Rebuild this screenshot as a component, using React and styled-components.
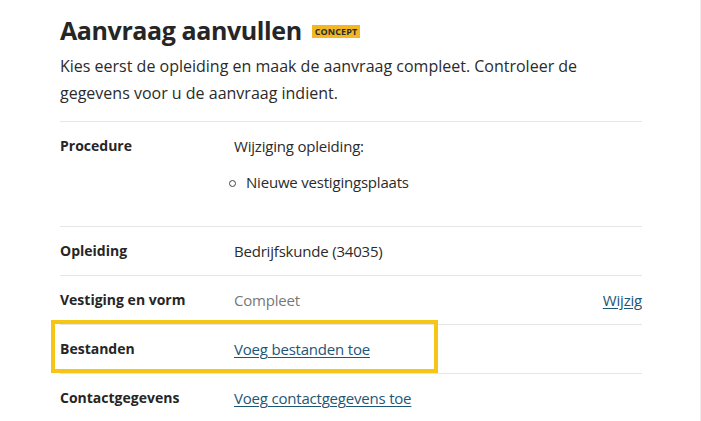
import React from "react";
import styled, { createGlobalStyle } from "styled-components";

const Global = createGlobalStyle`
  html, body { margin: 0; padding: 0; background: #fff; }
  body { font-family: "Open Sans", "Noto Sans", sans-serif; color: #262626; }
  * { box-sizing: border-box; }
`;

const Page = styled.div`
  width: 701px;
  height: 421px;
  overflow: hidden;
  padding: 12px 0 0 60px;
  border-right: 1px solid #ececec;
`;

const Main = styled.div`
  width: 582px;
`;

const TitleRow = styled.div`
  display: flex;
  align-items: center;
  gap: 10px;
`;

const Title = styled.h1`
  margin: 0;
  font-size: 25px;
  line-height: 36px;
  font-weight: 700;
  color: #262626;
  letter-spacing: -0.4px;
`;

const Badge = styled.span`
  display: inline-block;
  background: #f3b724;
  color: #2b2b2b;
  font-size: 9px;
  font-weight: 700;
  line-height: 13px;
  padding: 0 3px;
  margin-top: 3px;
  letter-spacing: 0.1px;
`;

const Intro = styled.p`
  margin: 5px 0 14px;
  font-size: 16px;
  line-height: 27px;
  color: #2b2b2b;
`;

const List = styled.div`
  border-top: 1px solid #e6e6e6;
`;

const Row = styled.div`
  position: relative;
  display: grid;
  grid-template-columns: 174px 1fr auto;
  padding: 12px 0;
  border-bottom: 1px solid #e6e6e6;
  font-size: 15px;
  line-height: 24px;
`;

const Label = styled.div`
  font-weight: 700;
  font-size: 14px;
  color: #262626;
`;

const Value = styled.div`
  letter-spacing: -0.2px;
  color: ${(p) => (p.$muted ? "#777" : "#2b2b2b")};
`;

const Link = styled.a`
  color: #1d5677;
  letter-spacing: -0.2px;
  text-decoration: underline;
  text-underline-offset: 2px;
  cursor: pointer;
`;

const Bullets = styled.ul`
  list-style: none;
  margin: 12px 0 20px;
  padding: 0;
`;

const Bullet = styled.li`
  position: relative;
  padding-left: 12px;
  &::before {
    content: "";
    position: absolute;
    left: -5px;
    top: 10px;
    width: 5px;
    height: 5px;
    border: 1px solid #444;
    border-radius: 50%;
  }
`;

const Highlight = styled.div`
  position: absolute;
  top: -5px;
  left: -9px;
  width: 387px;
  height: 53px;
  border: 4px solid #f5c518;
  pointer-events: none;
`;

export default function App() {
  return (
    <>
      <Global />
      <Page>
        <Main>
          <TitleRow>
            <Title>Aanvraag aanvullen</Title>
            <Badge>CONCEPT</Badge>
          </TitleRow>
          <Intro>
            Kies eerst de opleiding en maak de aanvraag compleet. Controleer de
            gegevens voor u de aanvraag indient.
          </Intro>
          <List>
            <Row>
              <Label>Procedure</Label>
              <Value>
                Wijziging opleiding:
                <Bullets>
                  <Bullet>Nieuwe vestigingsplaats</Bullet>
                </Bullets>
              </Value>
            </Row>
            <Row>
              <Label>Opleiding</Label>
              <Value>Bedrijfskunde (34035)</Value>
            </Row>
            <Row>
              <Label>Vestiging en vorm</Label>
              <Value $muted>Compleet</Value>
              <Link>Wijzig</Link>
            </Row>
            <Row>
              <Highlight />
              <Label>Bestanden</Label>
              <Value>
                <Link>Voeg bestanden toe</Link>
              </Value>
            </Row>
            <Row>
              <Label>Contactgegevens</Label>
              <Value>
                <Link>Voeg contactgegevens toe</Link>
              </Value>
            </Row>
          </List>
        </Main>
      </Page>
    </>
  );
}
